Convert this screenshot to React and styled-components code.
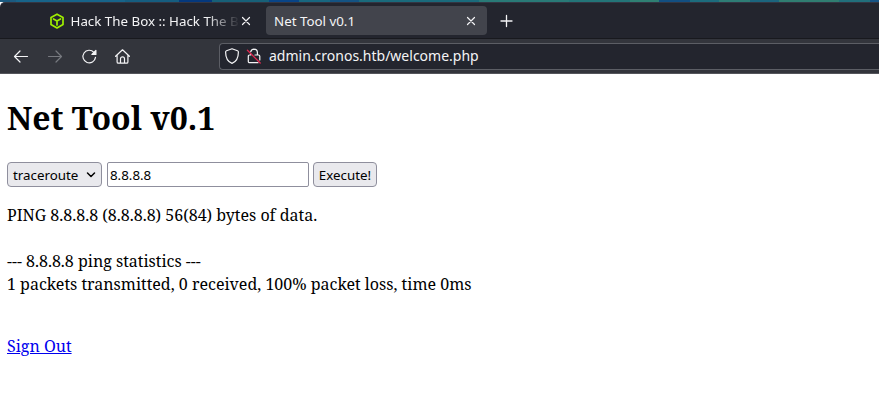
import React from "react";
import styled, { createGlobalStyle } from "styled-components";

const GlobalStyle = createGlobalStyle`
  * { box-sizing: border-box; }
  body { margin: 0; background: #fff; overflow: hidden; }
`;

const Window = styled.div`
  width: 879px;
  height: 407px;
  display: flex;
  flex-direction: column;
  font-family: "Noto Sans", sans-serif;
`;

const DesktopStrip = styled.div`
  height: 2px;
  background: linear-gradient(90deg, #1b5a80 0 16px, #17648a 16px 125px, #155d80 125px 179px, #04387d 179px 212px, #176078 212px 269px, #084487 269px 299px, #186780 299px 330px, #145383 330px 359px, #1a6b7c 359px 479px, #297a77 479px 569px, #237578 569px 630px, #2f8073 630px 659px, #124f82 659px 690px, #1c6c7d 690px 719px, #2e7d75 719px 750px, #1b657e 750px 779px, #307e71 779px 839px, #216f7b 839px 870px, #165485 870px);
`;

const TabBar = styled.div`
  height: 37px;
  display: flex;
  align-items: center;
  padding-left: 45px;
  background: #23252e;
  border-top: 1px solid #343643;
  border-bottom: 1px solid #18191e;
  border-top-left-radius: 5px;
`;

const Tab = styled.div`
  width: 221px;
  height: 29px;
  display: flex;
  align-items: center;
  padding: 0 ${(p) => (p.$active ? 10 : 14)}px 0 ${(p) => (p.$active ? 8 : 4)}px;
  border-radius: 4px;
  color: #f4f4f6;
  background: ${(p) => (p.$active ? "#42444c" : "transparent")};
`;

const TabTitle = styled.span`
  flex: 1;
  min-width: 0;
  overflow: hidden;
  white-space: nowrap;
  font-size: 13.33px;
  line-height: 20px;
  margin-left: ${(p) => (p.$fade ? 5.5 : 0)}px;
  ${(p) => p.$fade && "mask-image: linear-gradient(90deg, #000 calc(100% - 34px), transparent 100%);"}
`;

const Glyph = styled.svg`
  flex: none;
  display: block;
  fill: none;
  stroke: ${(p) => p.$color || "#f4f4f6"};
  stroke-width: ${(p) => p.$weight || 1.2};
  stroke-linecap: round;
  stroke-linejoin: round;
`;

const NewTab = styled.div`
  margin-left: 11px;
`;

const Toolbar = styled.div`
  height: 35px;
  display: flex;
  align-items: center;
  background: #33353c;
  border-bottom: 1px solid #54555b;
`;

const NavButtons = styled.div`
  width: 219px;
  display: flex;
  gap: 18px;
  padding: 1px 0 0 13px;
`;

const AddressField = styled.div`
  flex: 1;
  height: 27px;
  display: flex;
  align-items: center;
  gap: 6px;
  padding-left: 4px;
  background: #23252e;
  border: 1px solid #5c5e65;
  border-right: 0;
  border-radius: 4px 0 0 4px;
`;

const Address = styled.span`
  font-size: 14px;
  line-height: 22px;
  color: #f4f4f6;
  margin: -1px 0 0 1px;
`;

const Page = styled.main`
  flex: 1;
  padding: 21px 7px 0;
  color: #000;
  font-family: "Noto Serif", "Droid Serif", "DejaVu Serif Condensed", "Liberation Serif", serif;
  font-size: 16px;
  line-height: 23px;
`;

const Heading = styled.h1`
  margin: 0;
  font-size: 32px;
  line-height: 46px;
`;

const CommandForm = styled.div`
  display: flex;
  margin-top: 21px;
  height: 25px;
  font-family: "Noto Sans", sans-serif;
  font-size: 13.33px;
  line-height: 22px;
`;

const CommandSelect = styled.div`
  width: 95px;
  display: flex;
  align-items: center;
  justify-content: space-between;
  padding: 1px 5px 0;
  border: 1px solid #8f8f9d;
  border-radius: 4px;
  background: #e9e9ed;
`;

const HostInput = styled.input`
  width: 202px;
  margin: 0 4px 0 5px;
  padding: 1px 2px 0;
  border: 1px solid #8f8f9d;
  border-radius: 2px;
  font: inherit;
  color: #000;
  background: #fff;
  outline: 0;
`;

const ExecuteButton = styled.button`
  width: 64px;
  padding: 1px 0 0;
  border: 1px solid #8f8f9d;
  border-radius: 4px;
  font: inherit;
  color: #000;
  background: #e9e9ed;
`;

const Output = styled.div`
  margin-top: 17px;
  white-space: pre;
`;

const SignOut = styled.a`
  display: inline-block;
  margin-top: 39px;
  color: #0000ee;
  text-decoration: underline;
`;

const CloseIcon = () => (
  <Glyph width="12" height="12" viewBox="0 0 12 12">
    <path d="M2.5 2.5l7 7M9.5 2.5l-7 7" />
  </Glyph>
);

const CubeIcon = () => (
  <Glyph width="16" height="16" viewBox="0 0 16 16" $color="#9fef00" $weight={1.7}>
    <path d="M8 1.2L14 4.4V11.5L8 15L2 11.5V4.4ZM4.5 6L8 7.9L11.5 6M8 8v4" />
  </Glyph>
);

const BackIcon = () => (
  <Glyph width="16" height="16" viewBox="0 0 16 16">
    <path d="M14.5 7.5H1.5M7 2L1.5 7.5L7 13" />
  </Glyph>
);

const ForwardIcon = () => (
  <Glyph width="16" height="16" viewBox="0 0 16 16" $color="#77797f">
    <path d="M1.5 7.5h13M9 2L14.5 7.5L9 13" />
  </Glyph>
);

const ReloadIcon = () => (
  <Glyph width="16" height="16" viewBox="-0.6 0 16 16">
    <path d="M12.3 3.3A6.3 6.3 0 1 0 13.9 8.4" />
    <path d="M14.3 1.5V5.5H10.3Z" fill="#f4f4f6" />
  </Glyph>
);

const HomeIcon = () => (
  <Glyph width="16" height="16" viewBox="0 0 16 16">
    <path d="M.6 7.3L7.5 .8L14.4 7.3M2.1 6.2V12.9A1.3 1.3 0 0 0 3.4 14.2H11.6A1.3 1.3 0 0 0 12.9 12.9V6.2M5.5 14V9.8A2 2 0 0 1 9.5 9.8V14" />
  </Glyph>
);

const ShieldIcon = () => (
  <Glyph width="16" height="16" viewBox="0 0 16 16">
    <path d="M8 .8L13.5 2.7Q14.4 3 14.4 4C14.4 9.2 12.4 13.7 8 15.4C3.6 13.7 1.6 9.2 1.6 4Q1.6 3 2.5 2.7Z" />
  </Glyph>
);

const InsecureLockIcon = () => (
  <Glyph width="16" height="16" viewBox="0 0 16 16">
    <path d="M4.7 3.8C5.2 2.1 6.4 1.1 8 1.1A3.5 3.5 0 0 1 11.4 4.6V7M9 7H12.6A1.2 1.2 0 0 1 13.8 8.2V12M12 14.7H3.5A1.2 1.2 0 0 1 2.3 13.5V8.2A1.2 1.2 0 0 1 3.5 7H4.8V6" />
    <path d="M1.4 2.2L14.2 15" stroke="#e22850" strokeWidth="1.3" />
  </Glyph>
);

const PlusIcon = () => (
  <Glyph width="16" height="16" viewBox="0 0 16 16" $weight={1.3}>
    <path d="M8.5 2.5V13.5M3 8H14" />
  </Glyph>
);

const ChevronIcon = () => (
  <Glyph width="10" height="8" viewBox="0 0 10 8" $color="#000" $weight={1.5}>
    <path d="M1.5 2L5 5.5L8.5 2" />
  </Glyph>
);

export default function App() {
  return (
    <Window>
      <GlobalStyle />
      <DesktopStrip />
      <TabBar>
        <Tab>
          <CubeIcon />
          <TabTitle $fade>Hack The Box :: Hack The Box</TabTitle>
          <CloseIcon />
        </Tab>
        <Tab $active>
          <TabTitle>Net Tool v0.1</TabTitle>
          <CloseIcon />
        </Tab>
        <NewTab><PlusIcon /></NewTab>
      </TabBar>
      <Toolbar>
        <NavButtons>
          <BackIcon />
          <ForwardIcon />
          <ReloadIcon />
          <HomeIcon />
        </NavButtons>
        <AddressField>
          <ShieldIcon />
          <InsecureLockIcon />
          <Address>admin.cronos.htb/welcome.php</Address>
        </AddressField>
      </Toolbar>
      <Page>
        <Heading>Net Tool v0.1</Heading>
        <CommandForm>
          <CommandSelect>traceroute<ChevronIcon /></CommandSelect>
          <HostInput defaultValue="8.8.8.8" />
          <ExecuteButton>Execute!</ExecuteButton>
        </CommandForm>
        <Output>{"PING 8.8.8.8 (8.8.8.8) 56(84) bytes of data.\n\n--- 8.8.8.8 ping statistics ---\n1 packets transmitted, 0 received, 100% packet loss, time 0ms"}</Output>
        <SignOut href="#">Sign Out</SignOut>
      </Page>
    </Window>
  );
}
